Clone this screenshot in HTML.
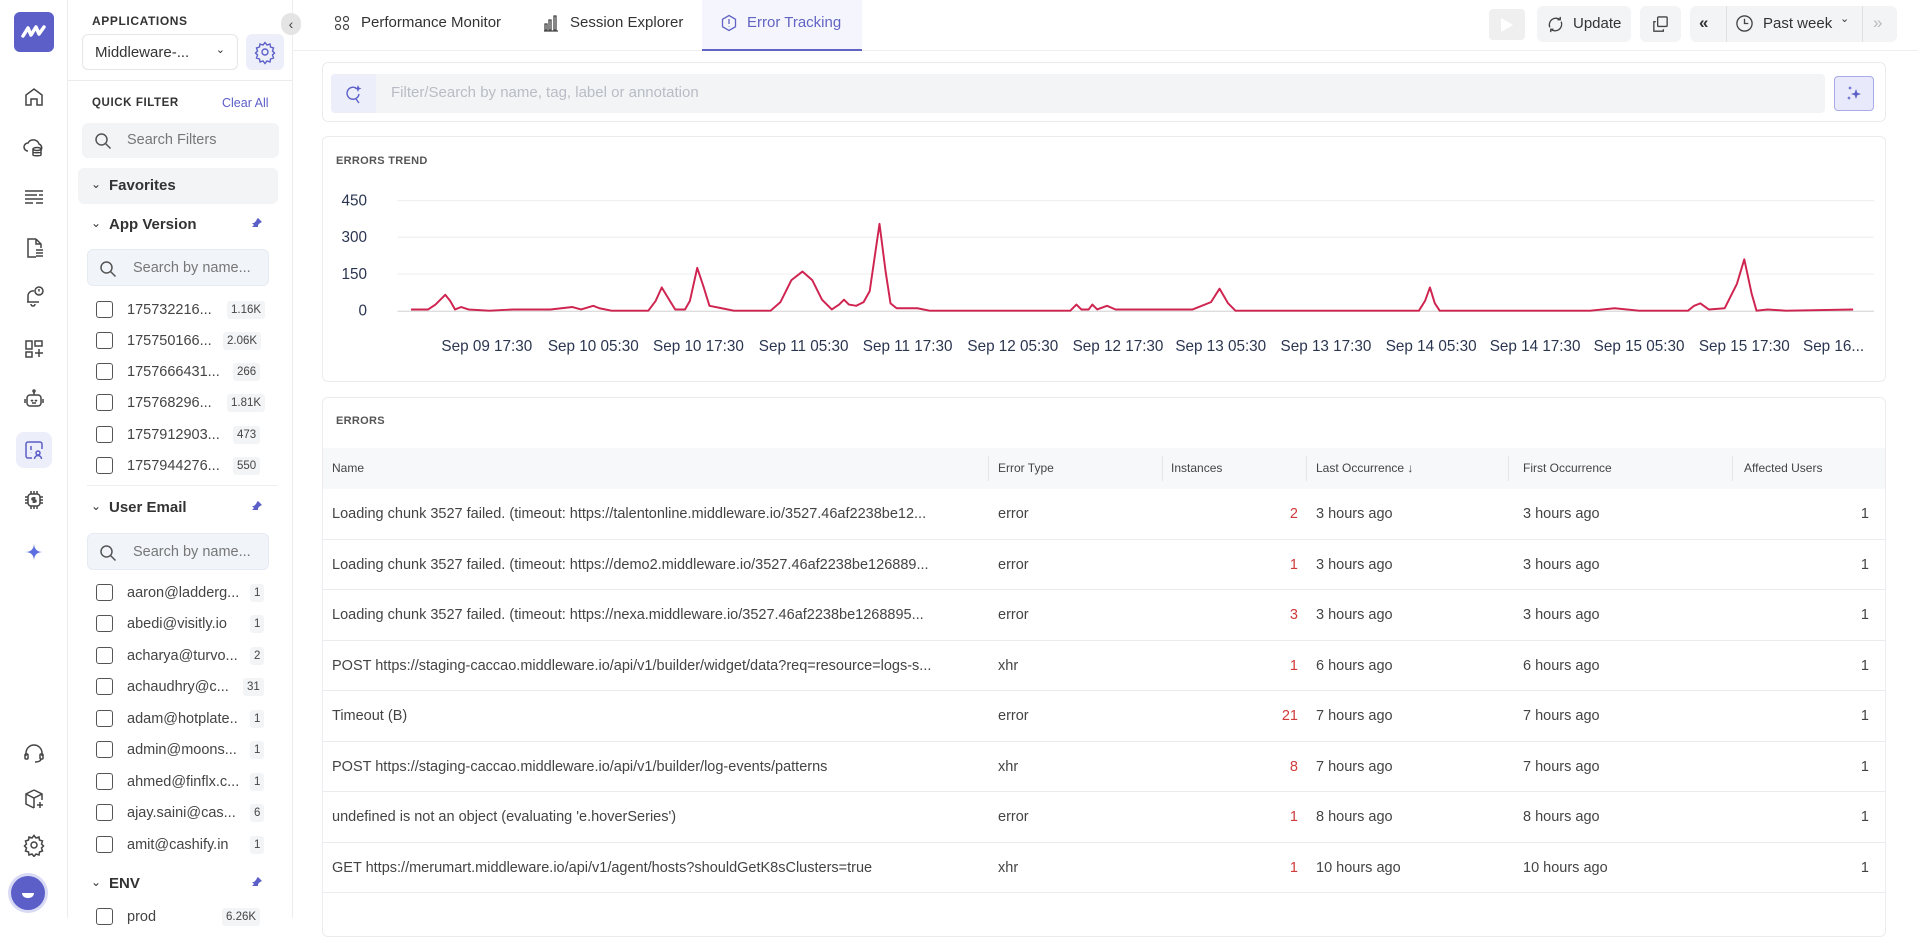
<!DOCTYPE html>
<html><head><meta charset="utf-8">
<style>
*{box-sizing:border-box;margin:0;padding:0}
body{width:1918px;height:918px;overflow:hidden;background:#fff;font-family:"Liberation Sans",sans-serif;color:#333;position:relative}
.a{position:absolute}
.rail{left:0;top:0;width:68px;height:918px;border-right:1px solid #ececec;background:#fff}
.ri{position:absolute;left:22px;width:24px;height:24px}
.panel{left:68px;top:0;width:225px;height:918px;border-right:1px solid #ececec}
.cap{font-size:12px;font-weight:bold;letter-spacing:.6px;color:#333}
.sb{background:#f3f4f6;border-radius:6px}
.chk{position:absolute;left:96px;width:17px;height:17px;border:1.5px solid #555;border-radius:3px}
.it{position:absolute;left:127px;font-size:14.5px;color:#444;white-space:nowrap}
.bd{position:absolute;font-size:11.5px;color:#444;background:#f3f4f6;padding:3px 4px;border-radius:3px}
.sec{position:absolute;left:109px;font-size:15px;font-weight:bold;color:#333}
.chev{position:absolute;left:91px;font-size:12px}
.pin{position:absolute;width:10px;height:10px}
.card{border:1px solid #ececf0;border-radius:6px;background:#fff}
.row{position:absolute;left:323px;width:1562px;height:50.5px;border-bottom:1px solid #ececf0;font-size:14.5px;color:#444}
.row span{position:absolute;top:17px;white-space:nowrap}
.hd span{position:absolute;top:13px;font-size:12px;color:#444}
.red{color:#d03a3a}
</style></head><body>

<!-- rail -->
<div class="a rail">
  <div class="a" style="left:14px;top:12px;width:40px;height:40px;background:#5b5fc7;border-radius:6px">
    <svg width="40" height="40" viewBox="0 0 40 40"><path d="M9 24 L14 16 L17 23 L22 15 L25 22 L30 15" stroke="#fff" stroke-width="3.5" fill="none" stroke-linecap="round" stroke-linejoin="round"/></svg>
  </div>
  <svg class="ri" style="top:85px" viewBox="0 0 24 24" fill="none" stroke="#444" stroke-width="1.5"><path d="M4 20V10l8-6 8 6v10h-5v-6h-6v6z"/></svg>
  <svg class="ri" style="top:135px" viewBox="0 0 24 24" fill="none" stroke="#444" stroke-width="1.5"><path d="M6 16a4 4 0 0 1 0-8 6 6 0 0 1 11 1 4 4 0 0 1 2 6"/><ellipse cx="15" cy="14" rx="4" ry="1.5"/><path d="M11 14v6c0 1 8 1 8 0v-6M11 17c0 1 8 1 8 0"/></svg>
  <svg class="ri" style="top:185px" viewBox="0 0 24 24" fill="none" stroke="#444" stroke-width="1.5"><path d="M3 6h18M3 10h12M17 10h4M3 14h18M3 18h8M14 18h7"/></svg>
  <svg class="ri" style="top:236px" viewBox="0 0 24 24" fill="none" stroke="#444" stroke-width="1.5"><path d="M14 3H6v18h8M14 3l5 5v4M14 3v5h5M14 14h7M14 17h7M14 20h7"/></svg>
  <svg class="ri" style="top:284px" viewBox="0 0 24 24" fill="none" stroke="#444" stroke-width="1.5"><path d="M5 18h12M6 18v-6a5 5 0 0 1 6-5M9 20a2 2 0 0 0 4 0"/><circle cx="17" cy="7" r="4"/><path d="M17 5v2.5M17 9v.3"/></svg>
  <svg class="ri" style="top:337px" viewBox="0 0 24 24" fill="none" stroke="#444" stroke-width="1.5"><rect x="4" y="4" width="6" height="8"/><rect x="13" y="4" width="7" height="5"/><rect x="4" y="15" width="6" height="5"/><path d="M17 12v8M13 16h8"/></svg>
  <svg class="ri" style="top:387px" viewBox="0 0 24 24" fill="none" stroke="#444" stroke-width="1.5"><rect x="5" y="8" width="14" height="11" rx="3"/><path d="M12 8V5M3 12v4M21 12v4M9 13l1 1 1-1M13 13l1 1 1-1M10 16h4"/><circle cx="12" cy="4" r="1"/></svg>
  <div class="a" style="left:16px;top:432px;width:36px;height:36px;background:#eceefa;border-radius:8px"></div>
  <svg class="ri" style="top:438px" viewBox="0 0 24 24" fill="none" stroke="#5b5fc7" stroke-width="1.5"><path d="M10 20H6a2 2 0 0 1-2-2V6a2 2 0 0 1 2-2h12a2 2 0 0 1 2 2v5"/><path d="M9 8v4M9 14v.3"/><circle cx="16" cy="15" r="2"/><path d="M12.5 21a3.5 3.5 0 0 1 7 0"/></svg>
  <svg class="ri" style="top:488px" viewBox="0 0 24 24" fill="none" stroke="#444" stroke-width="1.5"><rect x="6" y="6" width="12" height="12" rx="3"/><path d="M9 3v3M12 3v3M15 3v3M9 18v3M12 18v3M15 18v3M3 9h3M3 12h3M3 15h3M18 9h3M18 12h3M18 15h3"/><path d="M13.5 10h-2.5a1 1 0 0 0 0 2h2a1 1 0 0 1 0 2h-2.5M12 9v6"/></svg>
  <svg class="ri" style="top:540px" viewBox="0 0 24 24"><path d="M12 3 C12 9 9 12 3 12 C9 12 12 15 12 21 C12 15 15 12 21 12 C15 12 12 9 12 3Z" fill="#5b6fe0"/></svg>
  <svg class="ri" style="top:741px" viewBox="0 0 24 24" fill="none" stroke="#444" stroke-width="1.5"><path d="M4 15v-3a8 8 0 0 1 16 0v3"/><rect x="3" y="13" width="3" height="5" rx="1"/><rect x="18" y="13" width="3" height="5" rx="1"/><path d="M19 18c0 2-3 3-6 3"/></svg>
  <svg class="ri" style="top:787px" viewBox="0 0 24 24" fill="none" stroke="#444" stroke-width="1.5"><path d="M12 3l8 4v6M12 3L4 7v10l8 4M4 7l8 4 8-4M12 11v10"/><path d="M18 15v6M15 18h6"/></svg>
  <svg class="ri" style="top:833px" viewBox="0 0 24 24" fill="none" stroke="#444" stroke-width="1.5"><circle cx="12" cy="12" r="3"/><path d="M12 2.5l2 2.5 3-1 .5 3 3 1-1 3 2 2-2 2 1 3-3 1-.5 3-3-1-2 2.5-2-2.5-3 1-.5-3-3-1 1-3-2-2 2-2-1-3 3-1 .5-3 3 1z"/></svg>
  <div class="a" style="left:11px;top:876px;width:34px;height:34px;border-radius:50%;background:#5b5fc7;box-shadow:0 0 0 3px #d9dbf5"></div>
  <div class="a" style="left:22px;top:893px;width:12px;height:5px;border-radius:0 0 6px 6px;background:#fff"></div>
</div>

<!-- filter panel -->
<div class="a panel">
  <div class="a cap" style="left:24px;top:14px">APPLICATIONS</div>
  <div class="a" style="left:14px;top:34px;width:156px;height:36px;border:1px solid #e6e6e6;border-radius:6px;font-size:15px;padding:9px 0 0 12px;color:#333">Middleware-...<span style="position:absolute;right:12px;top:8px;font-size:11px">&#8964;</span></div>
  <div class="a" style="left:178px;top:34px;width:38px;height:36px;background:#eceefa;border-radius:6px">
    <svg width="38" height="36" viewBox="0 0 38 36" fill="none" stroke="#5b5fc7" stroke-width="1.4"><circle cx="19" cy="18" r="3"/><path d="M19 8.5l2 2.5 3-1 .5 3 3 1-1 3 2 2-2 2 1 3-3 1-.5 3-3-1-2 2.5-2-2.5-3 1-.5-3-3-1 1-3-2-2 2-2-1-3 3-1 .5-3 3 1z"/></svg>
  </div>
  <div class="a" style="left:0;top:80px;width:225px;border-top:1px solid #ececec"></div>
  <div class="a cap" style="left:24px;top:97px;font-size:11.5px">QUICK FILTER</div>
  <div class="a" style="left:154px;top:96px;font-size:12.5px;color:#5b5fc7">Clear All</div>
  <div class="a sb" style="left:14px;top:123px;width:197px;height:35px"><svg class="a" style="left:12px;top:9px" width="18" height="18" viewBox="0 0 18 18" fill="none" stroke="#555" stroke-width="1.5"><circle cx="7.5" cy="7.5" r="5.5"/><path d="M11.5 11.5l5 5"/></svg><span class="a" style="left:45px;top:9px;font-size:14.5px;color:#777">Search Filters</span></div>
  <div class="a sb" style="left:10px;top:168px;width:200px;height:36px"></div>
  <div class="a" style="left:19px;top:249px;width:182px;height:37px;background:#f1f4f9;border:1px solid #e6ebf3;border-radius:6px"><svg class="a" style="left:11px;top:10px" width="18" height="18" viewBox="0 0 18 18" fill="none" stroke="#555" stroke-width="1.5"><circle cx="7.5" cy="7.5" r="5.5"/><path d="M11.5 11.5l5 5"/></svg><span class="a" style="left:45px;top:10px;font-size:14.5px;color:#777">Search by name...</span></div>
</div>
<div class="chev" style="top:177px">&#8964;</div>
<div class="sec" style="top:177px">Favorites</div>
<div class="chev" style="top:216px">&#8964;</div>
<div class="sec" style="top:216px">App Version</div>
<svg class="pin" style="left:252px;top:218px" viewBox="0 0 10 10"><path d="M6 0l4 4-2 1-2 2v2L0 9l2-2-2-2h2l2-2 1-2z" fill="#5b5fc7"/></svg>

<!-- app version items -->
<div class="chk" style="top:301px"></div><div class="it" style="top:302px">175732216...</div><div class="bd" style="left:227px;top:301px">1.16K</div>
<div class="chk" style="top:332px"></div><div class="it" style="top:333px">175750166...</div><div class="bd" style="left:223px;top:332px">2.06K</div>
<div class="chk" style="top:363px"></div><div class="it" style="top:364px">1757666431...</div><div class="bd" style="left:233px;top:363px">266</div>
<div class="chk" style="top:394px"></div><div class="it" style="top:395px">175768296...</div><div class="bd" style="left:227px;top:394px">1.81K</div>
<div class="chk" style="top:426px"></div><div class="it" style="top:427px">1757912903...</div><div class="bd" style="left:233px;top:426px">473</div>
<div class="chk" style="top:457px"></div><div class="it" style="top:458px">1757944276...</div><div class="bd" style="left:233px;top:457px">550</div>
<div class="a" style="left:87px;top:485px;width:190px;border-top:1px solid #eee"></div>

<div class="chev" style="top:499px">&#8964;</div>
<div class="sec" style="top:499px">User Email</div>
<svg class="pin" style="left:252px;top:501px" viewBox="0 0 10 10"><path d="M6 0l4 4-2 1-2 2v2L0 9l2-2-2-2h2l2-2 1-2z" fill="#5b5fc7"/></svg>
<div class="a" style="left:87px;top:533px;width:182px;height:37px;background:#f1f4f9;border:1px solid #e6ebf3;border-radius:6px"><svg class="a" style="left:11px;top:10px" width="18" height="18" viewBox="0 0 18 18" fill="none" stroke="#555" stroke-width="1.5"><circle cx="7.5" cy="7.5" r="5.5"/><path d="M11.5 11.5l5 5"/></svg><span class="a" style="left:45px;top:10px;font-size:14.5px;color:#777">Search by name...</span></div>

<div class="chk" style="top:584px"></div><div class="it" style="top:585px">aaron@ladderg...</div><div class="bd" style="left:250px;top:584px">1</div>
<div class="chk" style="top:615px"></div><div class="it" style="top:616px">abedi@visitly.io</div><div class="bd" style="left:250px;top:615px">1</div>
<div class="chk" style="top:647px"></div><div class="it" style="top:648px">acharya@turvo...</div><div class="bd" style="left:250px;top:647px">2</div>
<div class="chk" style="top:678px"></div><div class="it" style="top:679px">achaudhry@c...</div><div class="bd" style="left:243px;top:678px">31</div>
<div class="chk" style="top:710px"></div><div class="it" style="top:711px">adam@hotplate..</div><div class="bd" style="left:250px;top:710px">1</div>
<div class="chk" style="top:741px"></div><div class="it" style="top:742px">admin@moons...</div><div class="bd" style="left:250px;top:741px">1</div>
<div class="chk" style="top:773px"></div><div class="it" style="top:774px">ahmed@finflx.c...</div><div class="bd" style="left:250px;top:773px">1</div>
<div class="chk" style="top:804px"></div><div class="it" style="top:805px">ajay.saini@cas...</div><div class="bd" style="left:250px;top:804px">6</div>
<div class="chk" style="top:836px"></div><div class="it" style="top:837px">amit@cashify.in</div><div class="bd" style="left:250px;top:836px">1</div>
<div class="chev" style="top:875px">&#8964;</div>
<div class="sec" style="top:875px">ENV</div>
<svg class="pin" style="left:252px;top:877px" viewBox="0 0 10 10"><path d="M6 0l4 4-2 1-2 2v2L0 9l2-2-2-2h2l2-2 1-2z" fill="#5b5fc7"/></svg>
<div class="chk" style="top:908px"></div><div class="it" style="top:909px">prod</div><div class="bd" style="left:222px;top:908px">6.26K</div>

<!-- collapse btn -->
<div class="a" style="left:281px;top:13px;width:20px;height:22px;border-radius:11px;background:#e4e4e4;font-size:14px;text-align:center;line-height:22px;color:#444">&#8249;</div>

<!-- tabs -->
<div class="a" style="left:293px;top:50px;width:1625px;border-top:1px solid #eee"></div>
<svg class="a" style="left:334px;top:15px" width="16" height="16" viewBox="0 0 16 16" fill="none" stroke="#444" stroke-width="1.2"><circle cx="4" cy="4" r="2.5"/><circle cx="12" cy="4" r="2.5"/><circle cx="4" cy="12" r="2.5"/><circle cx="12" cy="12" r="2.5"/></svg>
<div class="a" style="left:361px;top:14px;font-size:15px;color:#333">Performance Monitor</div>
<svg class="a" style="left:543px;top:14px" width="16" height="18" viewBox="0 0 16 18" fill="none" stroke="#444" stroke-width="1.3"><path d="M1 17h14M2 10h2v6H2zM6 6h2v10H6zM11 2h2v14h-2z"/></svg>
<div class="a" style="left:570px;top:14px;font-size:15px;color:#333">Session Explorer</div>
<div class="a" style="left:702px;top:0;width:160px;height:51px;background:#f5f5fd;border-bottom:2px solid #6264c4"></div>
<svg class="a" style="left:720px;top:14px" width="18" height="18" viewBox="0 0 18 18" fill="none" stroke="#6264c4" stroke-width="1.3"><path d="M9 1.5l6.5 3.75v7.5L9 16.5l-6.5-3.75v-7.5z"/><path d="M9 5v5M9 12v.5"/></svg>
<div class="a" style="left:747px;top:14px;font-size:15px;color:#6264c4">Error Tracking</div>

<!-- right controls -->
<div class="a" style="left:1489px;top:9px;width:36px;height:31px;background:#efefef;border-radius:4px"><svg class="a" style="left:12px;top:9px" width="12" height="14"><path d="M0 0l12 7-12 7z" fill="#fff"/></svg></div>
<div class="a sb" style="left:1537px;top:6px;width:94px;height:36px"><svg class="a" style="left:9px;top:9px" width="19" height="19" viewBox="0 0 20 20" fill="none" stroke="#444" stroke-width="1.4"><path d="M4 13a7 7 0 0 1 11-8M16 7a7 7 0 0 1-11 8M15 2v3h-3M5 18v-3h3"/></svg><span class="a" style="left:36px;top:9px;font-size:15px">Update</span></div>
<div class="a sb" style="left:1640px;top:6px;width:41px;height:36px"><svg class="a" style="left:11px;top:9px" width="19" height="19" viewBox="0 0 20 20" fill="none" stroke="#444" stroke-width="1.4"><rect x="7" y="2" width="10" height="10" rx="1"/><path d="M5 7H3v10h10v-2"/></svg></div>
<div class="a sb" style="left:1690px;top:6px;width:207px;height:36px"></div>
<div class="a" style="left:1726px;top:6px;height:36px;border-left:1px solid #e0e0e0"></div>
<div class="a" style="left:1862px;top:6px;height:36px;border-left:1px solid #e0e0e0"></div>
<div class="a" style="left:1699px;top:13px;font-size:17px;font-weight:bold;color:#333">&#171;</div>
<svg class="a" style="left:1735px;top:14px" width="19" height="19" viewBox="0 0 20 20" fill="none" stroke="#444" stroke-width="1.4"><circle cx="10" cy="10" r="8"/><path d="M10 5v5h4"/></svg>
<div class="a" style="left:1763px;top:15px;font-size:15px">Past week</div>
<div class="a" style="left:1840px;top:12px;font-size:11px">&#8964;</div>
<div class="a" style="left:1873px;top:13px;font-size:17px;color:#bbb">&#187;</div>

<!-- search card -->
<div class="a card" style="left:322px;top:62px;width:1564px;height:60px"></div>
<div class="a" style="left:331px;top:74px;width:1494px;height:39px;background:#f3f4f6;border-radius:4px"></div>
<div class="a" style="left:331px;top:74px;width:45px;height:39px;background:#eceefa;border-radius:4px 0 0 4px"><svg class="a" style="left:12px;top:9px" width="22" height="22" viewBox="0 0 22 22" fill="none" stroke="#5b5fc7" stroke-width="1.4"><path d="M13 5a6 6 0 1 0 3 6M13 16l3 4"/><path d="M15 2l1 2.5 2.5 1-2.5 1-1 2.5-1-2.5-2.5-1 2.5-1z" fill="#5b5fc7" stroke="none"/></svg></div>
<div class="a" style="left:391px;top:84px;font-size:15px;color:#b8bcc4">Filter/Search by name, tag, label or annotation</div>
<div class="a" style="left:1834px;top:76px;width:40px;height:35px;background:#e8e9fb;border:1px solid #a9abe8;border-radius:4px"><svg class="a" style="left:10px;top:8px" width="18" height="18" viewBox="0 0 18 18" fill="#5b5fc7"><path d="M11 4l1.3 3.7L16 9l-3.7 1.3L11 14l-1.3-3.7L6 9l3.7-1.3z"/><path d="M5 1l.6 1.4L7 3l-1.4.6L5 5l-.6-1.4L3 3l1.4-.6zM4 11l.6 1.4L6 13l-1.4.6L4 15l-.6-1.4L2 13l1.4-.6z"/></svg></div>

<!-- trend card -->
<div class="a card" style="left:322px;top:136px;width:1564px;height:246px"></div>
<div class="a" style="left:336px;top:155px;font-size:11px;font-weight:bold;color:#555;letter-spacing:.3px">ERRORS TREND</div>
<svg class="a" style="left:0;top:0" width="1918" height="918" viewBox="0 0 1568 750.5" font-family="Liberation Sans, sans-serif">
  <g stroke="#f0f0f0" stroke-width="1"><path d="M325 164H1532M325 194H1532M325 224H1532"/></g>
  <path d="M325 254.5H1532" stroke="#ddd" stroke-width="1.2"/>
  <g font-size="12.5" fill="#2a3550" text-anchor="end"><text x="300" y="168">450</text><text x="300" y="198">300</text><text x="300" y="228">150</text><text x="300" y="258">0</text></g>
  <polyline fill="none" stroke="#cf2450" stroke-width="1.6" stroke-linejoin="round" points="336,253 350,253 356,249 364,241 368,246 372,253 377,251 383,253 400,254 420,253 450,253 468,251 475,253 485,250 490,252 500,254 530,254 536,246 541,235 547,245 552,253 560,253 564,246 570,219 575,234 580,250 590,252 600,254 630,254 638,247 647,229 656,222 664,229 672,245 680,253 686,249 690,245 694,249 700,250 706,247 711,238 719,183 724,222 728,248 733,252 750,252 760,254 800,254 850,254 875,254 880,249 884,253 890,253 893,249 897,253 905,250 912,253 950,253 975,253 990,247 997,236 1004,248 1010,254 1080,254 1160,254 1165,246 1169,235 1173,248 1177,254 1300,254 1320,252 1340,254 1380,254 1385,250 1390,248 1397,253 1410,252 1420,232 1426,212 1432,240 1436,254 1445,253 1460,254 1515,253"/>
  <g font-size="12.5" fill="#2a3550" text-anchor="middle">
    <text x="398" y="287">Sep 09 17:30</text><text x="485" y="287">Sep 10 05:30</text><text x="571" y="287">Sep 10 17:30</text><text x="657" y="287">Sep 11 05:30</text><text x="742" y="287">Sep 11 17:30</text><text x="828" y="287">Sep 12 05:30</text><text x="914" y="287">Sep 12 17:30</text><text x="998" y="287">Sep 13 05:30</text><text x="1084" y="287">Sep 13 17:30</text><text x="1170" y="287">Sep 14 05:30</text><text x="1255" y="287">Sep 14 17:30</text><text x="1340" y="287">Sep 15 05:30</text><text x="1426" y="287">Sep 15 17:30</text><text x="1499" y="287">Sep 16...</text>
  </g>
</svg>

<!-- errors card -->
<div class="a card" style="left:322px;top:397px;width:1564px;height:540px"></div>
<div class="a" style="left:336px;top:415px;font-size:11px;font-weight:bold;color:#555;letter-spacing:.3px">ERRORS</div>
<div class="row hd" style="top:448px;height:41px;background:#f7f8fa;border-bottom:none">
  <span style="left:9px">Name</span><span style="left:675px">Error Type</span><span style="left:848px">Instances</span><span style="left:993px">Last Occurrence &#8595;</span><span style="left:1200px">First Occurrence</span><span style="left:1421px">Affected Users</span>
  <i class="a" style="left:665px;top:8px;height:25px;border-left:1px solid #e6e6ea"></i>
  <i class="a" style="left:839px;top:8px;height:25px;border-left:1px solid #e6e6ea"></i>
  <i class="a" style="left:983px;top:8px;height:25px;border-left:1px solid #e6e6ea"></i>
  <i class="a" style="left:1185px;top:8px;height:25px;border-left:1px solid #e6e6ea"></i>
  <i class="a" style="left:1409px;top:8px;height:25px;border-left:1px solid #e6e6ea"></i>
</div>
<div class="row" style="top:489px"><span style="left:9px">Loading chunk 3527 failed. (timeout: https://talentonline.middleware.io/3527.46af2238be12...</span><span style="left:675px">error</span><span class="red" style="right:587px">2</span><span style="left:993px">3 hours ago</span><span style="left:1200px">3 hours ago</span><span style="right:16px">1</span></div>
<div class="row" style="top:539.5px"><span style="left:9px">Loading chunk 3527 failed. (timeout: https://demo2.middleware.io/3527.46af2238be126889...</span><span style="left:675px">error</span><span class="red" style="right:587px">1</span><span style="left:993px">3 hours ago</span><span style="left:1200px">3 hours ago</span><span style="right:16px">1</span></div>
<div class="row" style="top:590px"><span style="left:9px">Loading chunk 3527 failed. (timeout: https://nexa.middleware.io/3527.46af2238be1268895...</span><span style="left:675px">error</span><span class="red" style="right:587px">3</span><span style="left:993px">3 hours ago</span><span style="left:1200px">3 hours ago</span><span style="right:16px">1</span></div>
<div class="row" style="top:640.5px"><span style="left:9px">POST https://staging-caccao.middleware.io/api/v1/builder/widget/data?req=resource=logs-s...</span><span style="left:675px">xhr</span><span class="red" style="right:587px">1</span><span style="left:993px">6 hours ago</span><span style="left:1200px">6 hours ago</span><span style="right:16px">1</span></div>
<div class="row" style="top:691px"><span style="left:9px">Timeout (B)</span><span style="left:675px">error</span><span class="red" style="right:587px">21</span><span style="left:993px">7 hours ago</span><span style="left:1200px">7 hours ago</span><span style="right:16px">1</span></div>
<div class="row" style="top:741.5px"><span style="left:9px">POST https://staging-caccao.middleware.io/api/v1/builder/log-events/patterns</span><span style="left:675px">xhr</span><span class="red" style="right:587px">8</span><span style="left:993px">7 hours ago</span><span style="left:1200px">7 hours ago</span><span style="right:16px">1</span></div>
<div class="row" style="top:792px"><span style="left:9px">undefined is not an object (evaluating 'e.hoverSeries')</span><span style="left:675px">error</span><span class="red" style="right:587px">1</span><span style="left:993px">8 hours ago</span><span style="left:1200px">8 hours ago</span><span style="right:16px">1</span></div>
<div class="row" style="top:842.5px"><span style="left:9px">GET https://merumart.middleware.io/api/v1/agent/hosts?shouldGetK8sClusters=true</span><span style="left:675px">xhr</span><span class="red" style="right:587px">1</span><span style="left:993px">10 hours ago</span><span style="left:1200px">10 hours ago</span><span style="right:16px">1</span></div>

</body></html>
